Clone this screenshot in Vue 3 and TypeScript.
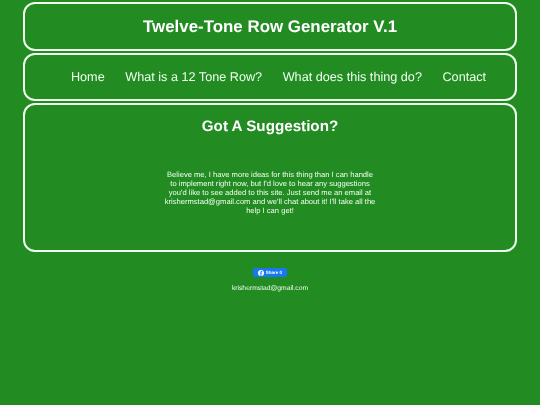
<script setup lang="ts">
const links = ['Home', 'What is a 12 Tone Row?', 'What does this thing do?', 'Contact']
</script>

<template>
  <div class="page">
    <header class="box title-box">
      <h1>Twelve-Tone Row Generator V.1</h1>
    </header>
    <nav class="box nav-box">
      <a v-for="link in links" :key="link" href="#">{{ link }}</a>
    </nav>
    <main class="box content-box">
      <h2>Got A Suggestion?</h2>
      <p>
        Believe me, I have more ideas for this thing than I can handle to implement right now, but I'd love
        to hear any suggestions you'd like to see added to this site. Just send me an email at
        krishermstad@gmail.com and we'll chat about it! I'll take all the help I can get!
      </p>
    </main>
    <footer class="footer">
      <a class="share" href="#">
        <svg viewBox="0 0 16 16" width="6" height="6">
          <circle cx="8" cy="8" r="8" fill="#fff" />
          <path d="M9 16V9.6h2l.4-2.3H9V6c0-.7.3-1.200 1.300-1.200h1.200V2.800c-.5-.1-1.100-.2-1.800-.2-1.900 0-3 1.100-3 3.100v1.600H4.800v2.300h1.900V16z" fill="#1877f2" />
        </svg>
        <span>Share 0</span>
      </a>
      <div class="mail">krishermstad@gmail.com</div>
    </footer>
  </div>
</template>

<style scoped>
.page {
  width: 494px;
  margin: 0 auto;
  padding-top: 2px;
  font-family: 'Liberation Sans', Arial, sans-serif;
  color: #fff;
  text-rendering: geometricPrecision;
  will-change: transform;
}

.box {
  box-sizing: border-box;
  border: 2px solid #f0fff0;
  border-radius: 12px;
  margin-bottom: 2px;
}

.title-box {
  height: 49px;
  display: flex;
  align-items: center;
  justify-content: center;
}

h1 {
  margin: 0;
  font-size: 16.900px;
  font-weight: bold;
}

.nav-box {
  height: 48px;
  padding-left: 17px;
  display: flex;
  align-items: center;
  justify-content: center;
  gap: 20.500px;
}

.nav-box a {
  color: #f0fff0;
  text-decoration: none;
  font-size: 12.660px;
}

.content-box {
  height: 149px;
  padding-top: 13px;
  text-align: center;
}

h2 {
  margin: 0;
  font-size: 15.200px;
  font-weight: bold;
  line-height: 18px;
}

p {
  width: 213px;
  margin: 34px auto 0;
  font-size: 7.600px;
  line-height: 9px;
  color: #f0fff0;
}

.footer {
  display: flex;
  flex-direction: column;
  align-items: center;
  padding-top: 14px;
}

.share {
  display: flex;
  align-items: center;
  justify-content: center;
  gap: 2px;
  width: 34px;
  height: 9px;
  border-radius: 2px;
  background: #1877f2;
  color: #fff;
  text-decoration: none;
  font-size: 4.500px;
  font-weight: bold;
}

.mail {
  margin-top: 7px;
  font-size: 6.750px;
  line-height: 9px;
  color: #f0fff0;
}
</style>

<style>
body {
  background: #228b22;
}
</style>
